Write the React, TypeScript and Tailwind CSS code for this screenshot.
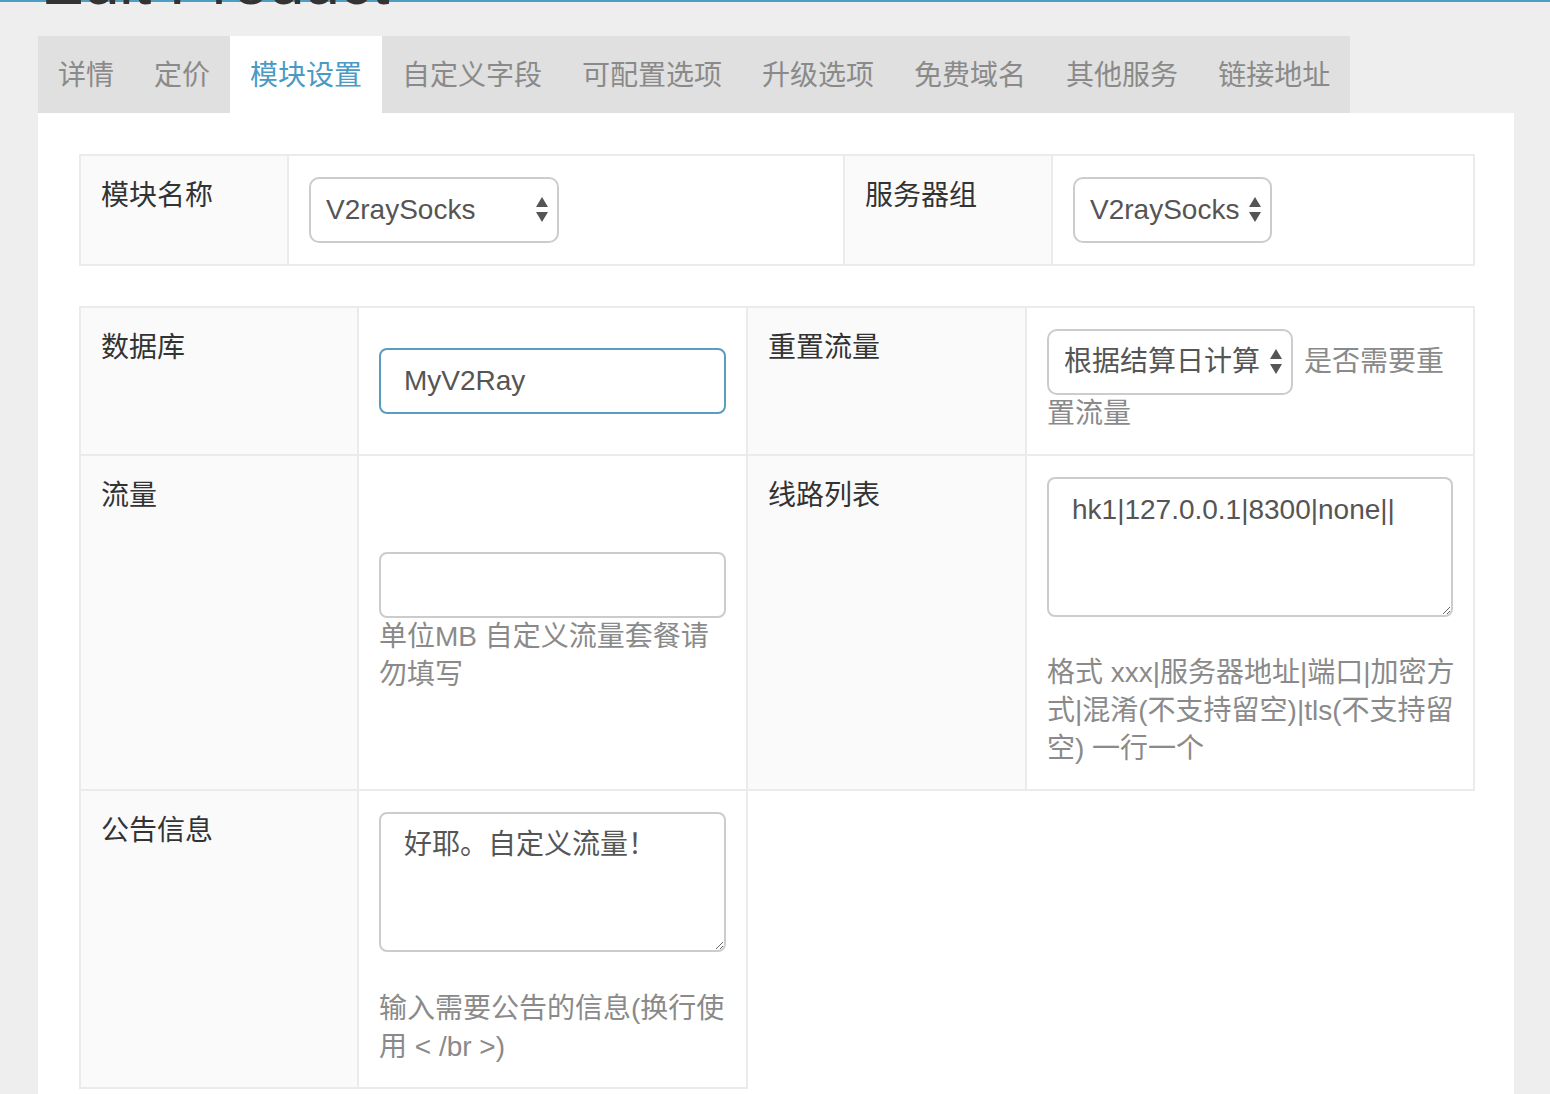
import React from 'react'

const tabs = ['详情', '定价', '模块设置', '自定义字段', '可配置选项', '升级选项', '免费域名', '其他服务', '链接地址']

const labelCell = 'border-2 border-[#ebebeb] bg-[#fafafa] align-top px-[20px] py-[21px] text-[28px] leading-[38px] text-[#333]'
const fieldCell = 'border-2 border-[#ebebeb] bg-white align-middle px-[20px] py-[21px]'
const helpText = 'text-[28px] leading-[38px] text-[#8a8a8a]'

const Arrows = () => (
    <svg width="12" height="26" viewBox="0 0 12 26" className="shrink-0">
        <path d="M6 0 L12 10 L0 10 Z" fill="#555" />
        <path d="M0 15 L12 15 L6 25 Z" fill="#555" />
    </svg>
)

const FakeSelect: React.FC<{ value: string; className?: string }> = ({ value, className = '' }) => (
    <div className={`inline-flex items-center justify-between gap-[10px] h-[66px] border-2 border-[#cccccc] rounded-[10px] bg-white pl-[15px] pr-[9px] text-[28px] text-[#555] align-baseline ${className}`}>
        <span className="whitespace-nowrap">{value}</span>
        <Arrows />
    </div>
)

export default function App() {
    return (
        <div className="min-h-screen bg-[#eeeeee] font-['Liberation_Sans','Noto_Sans_CJK_SC',sans-serif]">
            {/* page heading, mostly scrolled away */}
            <div className="h-[5px] overflow-hidden bg-[linear-gradient(#4e9ec4_0_2px,#eeeeee_2px)]">
                <div className="ml-[41px] -mt-[50px] text-[64px] leading-[64px] text-[#333] whitespace-nowrap">Edit Product</div>
            </div>

            <div className="ml-[38px] mr-[36px] mt-[31px]">
                {/* Tabs */}
                <div className="flex w-fit bg-[#e0e0e0]">
                    {tabs.map((t) => (
                        <div
                            key={t}
                            className={`h-[77px] flex items-center pt-[2px] px-[20px] text-[28px] ${t === '模块设置' ? 'bg-white text-[#4a9bc4]' : 'text-[#8a8a8a]'}`}
                        >
                            {t}
                        </div>
                    ))}
                </div>

                <div className="bg-white p-[41px]">
                    {/* Module */}
                    <table className="w-full table-fixed border-collapse">
                        <colgroup>
                            <col className="w-[208px]" />
                            <col className="w-[556px]" />
                            <col className="w-[208px]" />
                            <col className="w-[422px]" />
                        </colgroup>
                        <tbody>
                            <tr>
                                <td className={labelCell}>模块名称</td>
                                <td className={fieldCell}>
                                    <FakeSelect value="V2raySocks" className="w-[250px]" />
                                </td>
                                <td className={labelCell}>服务器组</td>
                                <td className={fieldCell}>
                                    <FakeSelect value="V2raySocks" />
                                </td>
                            </tr>
                        </tbody>
                    </table>

                    {/* Module settings */}
                    <table className="w-full table-fixed border-collapse mt-[40px]">
                        <colgroup>
                            <col className="w-[278px]" />
                            <col className="w-[389px]" />
                            <col className="w-[279px]" />
                            <col className="w-[448px]" />
                        </colgroup>
                        <tbody>
                            <tr>
                                <td className={labelCell}>数据库</td>
                                <td className={fieldCell}>
                                    <input
                                        readOnly
                                        defaultValue="MyV2Ray"
                                        className="block w-full h-[66px] border-2 border-[#5a9ebd] rounded-[8px] px-[23px] text-[28px] text-[#555] outline-none"
                                    />
                                </td>
                                <td className={labelCell}>重置流量</td>
                                <td className={fieldCell}>
                                    <div className={helpText}>
                                        <FakeSelect value="根据结算日计算" />
                                        <span className="ml-[11px]">是否需要重置流量</span>
                                    </div>
                                </td>
                            </tr>
                            <tr>
                                <td className={labelCell}>流量</td>
                                <td className={fieldCell}>
                                    <input
                                        readOnly
                                        defaultValue=""
                                        className="block w-full h-[66px] border-2 border-[#cccccc] rounded-[8px] px-[23px] text-[28px] text-[#555] outline-none"
                                    />
                                    <div className={helpText}>
                                        <div className="whitespace-nowrap">单位MB 自定义流量套餐请</div>
                                        <div className="whitespace-nowrap">勿填写</div>
                                    </div>
                                </td>
                                <td className={labelCell}>线路列表</td>
                                <td className={fieldCell}>
                                    <textarea
                                        readOnly
                                        defaultValue="hk1|127.0.0.1|8300|none||"
                                        className="block w-full h-[140px] border-2 border-[#cccccc] rounded-[8px] px-[23px] py-[12px] text-[28px] leading-[38px] text-[#555] outline-none mb-[37px]"
                                    />
                                    <div className={helpText}>
                                        <div className="whitespace-nowrap">格式 xxx|服务器地址|端口|加密方</div>
                                        <div className="whitespace-nowrap">式|混淆(不支持留空)|tls(不支持留</div>
                                        <div className="whitespace-nowrap">空) 一行一个</div>
                                    </div>
                                </td>
                            </tr>
                            <tr>
                                <td className={labelCell}>公告信息</td>
                                <td className={fieldCell}>
                                    <textarea
                                        readOnly
                                        defaultValue="好耶。自定义流量！"
                                        className="block w-full h-[140px] border-2 border-[#cccccc] rounded-[8px] px-[23px] py-[12px] text-[28px] leading-[38px] text-[#555] outline-none mb-[38px]"
                                    />
                                    <div className={helpText}>
                                        <div className="whitespace-nowrap">输入需要公告的信息(换行使</div>
                                        <div className="whitespace-nowrap">用 &lt; /br &gt;)</div>
                                    </div>
                                </td>
                            </tr>
                        </tbody>
                    </table>
                </div>
            </div>
        </div>
    )
}
